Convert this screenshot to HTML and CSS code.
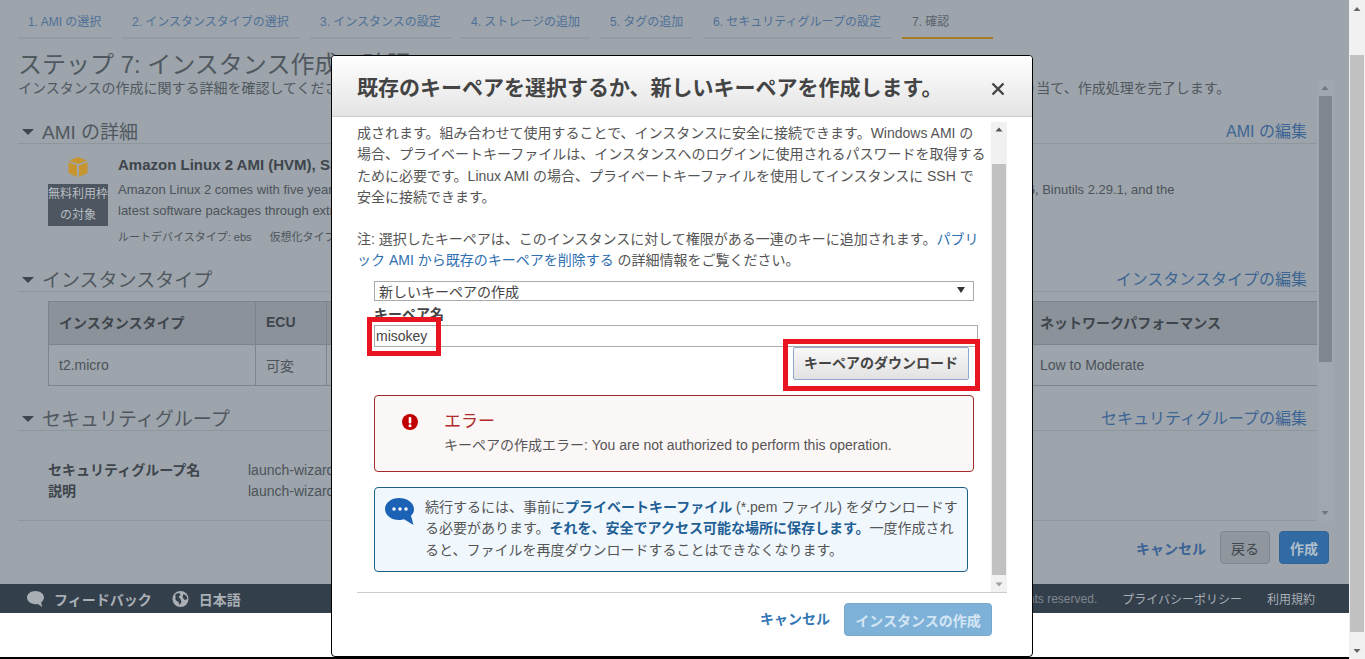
FILE: index.html
```html
<!DOCTYPE html>
<html lang="ja">
<head>
<meta charset="utf-8">
<title>ステップ 7: インスタンス作成の確認</title>
<link rel="stylesheet" href="styles.css">
</head>
<body>
<div class="window">
  <div class="page">
    <nav class="tabs">
      <a class="tab">1. AMI の選択</a>
      <a class="tab">2. インスタンスタイプの選択</a>
      <a class="tab">3. インスタンスの設定</a>
      <a class="tab">4. ストレージの追加</a>
      <a class="tab">5. タグの追加</a>
      <a class="tab">6. セキュリティグループの設定</a>
      <a class="tab tab-active">7. 確認</a>
    </nav>
    <h1 class="page-title">ステップ 7: インスタンス作成の確認</h1>
    <div class="panel">
      <div class="panel-body">
        <p class="page-sub">インスタンスの作成に関する詳細を確認してください。戻って各セクションの設定を編集できます。最後に [作成] をクリックして、インスタンスにキーペアを割り当て、作成処理を完了します。</p>
        <section class="section section-ami">
          <div class="section-head">
            <h2 class="section-title"><svg class="caret" viewBox="0 0 12 6"><polygon points="0,0 12,0 6,6"/></svg>AMI の詳細</h2>
            <a class="section-edit">AMI の編集</a>
          </div>
          <div class="ami">
            <div class="ami-side">
              <svg class="cube" viewBox="0 0 20 20"><polygon points="10,0 19,3.5 10,7 1,3.5" fill="#c6952f"/><polygon points="0.5,5 9,8.4 9,20 0.5,16" fill="#c6952f"/><polygon points="19.5,5 11,8.4 11,20 19.5,16" fill="#c6952f"/></svg>
              <div class="badge">無料利用枠<br>の対象</div>
            </div>
            <div class="ami-info">
              <div class="ami-name">Amazon Linux 2 AMI (HVM), SSD Volume Type - ami-00d101850e971728d</div>
              <div class="ami-desc">Amazon Linux 2 comes with five years support. It provides Linux kernel 4.14 tuned for optimal performance on Amazon EC2, systemd 219, GCC 7.3, Glibc 2.26, Binutils 2.29.1, and the<br>latest software packages through extras.</div>
              <div class="ami-meta"><span>ルートデバイスタイプ: ebs</span><span>仮想化タイプ: hvm</span></div>
            </div>
          </div>
        </section>
        <section class="section section-type">
          <div class="section-head">
            <h2 class="section-title"><svg class="caret" viewBox="0 0 12 6"><polygon points="0,0 12,0 6,6"/></svg>インスタンスタイプ</h2>
            <a class="section-edit">インスタンスタイプの編集</a>
          </div>
          <table class="type-table">
            <colgroup><col class="c1"><col class="c2"><col class="c3"><col class="c3"><col class="c3"><col class="c4"><col class="c5"></colgroup>
            <tr><th>インスタンスタイプ</th><th>ECU</th><th>vCPU</th><th>メモリ (GiB)</th><th>ストレージ</th><th>EBS 最適化</th><th>ネットワークパフォーマンス</th></tr>
            <tr><td>t2.micro</td><td>可変</td><td>1</td><td>1</td><td>EBS のみ</td><td>-</td><td>Low to Moderate</td></tr>
          </table>
        </section>
        <section class="section section-sg">
          <div class="section-head">
            <h2 class="section-title"><svg class="caret" viewBox="0 0 12 6"><polygon points="0,0 12,0 6,6"/></svg>セキュリティグループ</h2>
            <a class="section-edit">セキュリティグループの編集</a>
          </div>
          <dl class="sg">
            <dt>セキュリティグループ名</dt><dd>launch-wizard-1</dd>
            <dt>説明</dt><dd>launch-wizard-1 created</dd>
          </dl>
        </section>
      </div>
      <div class="panel-scroll">
        <svg class="sb-arrow" viewBox="0 0 16 16"><polygon points="4.5,10 11.5,10 8,6"/></svg>
        <div class="panel-thumb"></div>
        <div class="sb-fill"></div>
        <svg class="sb-arrow" viewBox="0 0 16 16"><polygon points="4.5,6 11.5,6 8,10"/></svg>
      </div>
    </div>
    <div class="page-actions">
      <a class="link-bold">キャンセル</a>
      <button class="btn btn-back">戻る</button>
      <button class="btn btn-launch">作成</button>
    </div>
    <footer class="footer">
      <svg class="foot-icon" viewBox="0 0 18 17"><path d="M9 0C4 0 0 3 0 7s4 7 9 7c1 0 1.500 0 2.500-.2L16 17l-1-5c2-1.300 3-3 3-5 0-4-4-7-9-7z"/></svg>
      <span class="foot-strong foot-feedback">フィードバック</span>
      <svg class="foot-icon" viewBox="0 0 16 16"><circle cx="8" cy="8" r="8"/><path d="M3 3l4-1 1 2-2 2 2 2 1 3-2 3-1-3-3-2zM11 3l3 2 1 3-3 1-2-3z" fill="#343f4c"/></svg>
      <span class="foot-strong">日本語</span>
      <span class="foot-copy">© 2008 - 2019, Amazon Web Services, Inc. or its affiliates. All rights reserved.</span>
      <a class="foot-link">プライバシーポリシー</a>
      <a class="foot-link">利用規約</a>
    </footer>
  </div>
  <div class="page-scroll">
    <svg class="sb-arrow" viewBox="0 0 16 16"><polygon points="4.500,11 11.500,11 8,7"/></svg>
    <div class="page-thumb"></div>
    <svg class="sb-arrow" viewBox="0 0 16 16"><polygon points="4.500,6 11.500,6 8,10"/></svg>
  </div>
</div>

<div class="modal">
  <header class="modal-head">
    <h2 class="modal-title">既存のキーペアを選択するか、新しいキーペアを作成します。</h2>
    <svg class="modal-close" viewBox="0 0 14 14"><path d="M1.500 1.500l11 11M12.500 1.500l-11 11"/></svg>
  </header>
  <div class="modal-body">
    <div class="modal-content">
      <p class="modal-text">成されます。組み合わせて使用することで、インスタンスに安全に接続できます。Windows AMI の<br>場合、プライベートキーファイルは、インスタンスへのログインに使用されるパスワードを取得する<br>ために必要です。Linux AMI の場合、プライベートキーファイルを使用してインスタンスに SSH で<br>安全に接続できます。</p>
      <p class="modal-text modal-note">注: 選択したキーペアは、このインスタンスに対して権限がある一連のキーに追加されます。<a class="link">パブリ<br>ック AMI から既存のキーペアを削除する</a> の詳細情報をご覧ください。</p>
      <div class="form">
        <div class="select"><span>新しいキーペアの作成</span><svg class="select-arrow" viewBox="0 0 8 8"><polygon points="0,1 8,1 4,7"/></svg></div>
        <label class="field-label">キーペア名</label>
        <div class="input">misokey</div>
        <div class="download-row"><button class="btn-download">キーペアのダウンロード</button></div>
        <div class="alert alert-error">
          <svg class="alert-icon" viewBox="0 0 16 16"><circle cx="8" cy="8" r="8" fill="#c00000"/><rect x="6.700" y="3" width="2.600" height="6.500" rx="1" fill="#fff"/><circle cx="8" cy="11.800" r="1.500" fill="#fff"/></svg>
          <div>
            <div class="alert-title">エラー</div>
            <div class="alert-msg">キーペアの作成エラー: You are not authorized to perform this operation.</div>
          </div>
        </div>
        <div class="alert alert-info">
          <svg class="info-icon" viewBox="0 0 30 28"><path d="M14 0C6.300 0 0 4.800 0 11s6.300 11 14 11c2 0 3.500-.2 5-.7L28.500 27 26 17.800c2-1.800 3-4.200 3-6.800C29 4.800 22 0 14 0z" fill="#1c62b4"/><circle cx="9" cy="11" r="1.700" fill="#fff"/><circle cx="15" cy="11" r="1.700" fill="#fff"/><circle cx="21" cy="11" r="1.700" fill="#fff"/></svg>
          <p class="info-text">続行するには、事前に<b>プライベートキーファイル</b> (*.pem ファイル) をダウンロードす<br>る必要があります。<b>それを、安全でアクセス可能な場所に保存します。</b>一度作成され<br>ると、ファイルを再度ダウンロードすることはできなくなります。</p>
        </div>
      </div>
    </div>
    <div class="modal-scroll">
      <svg class="sb-arrow" viewBox="0 0 16 16"><polygon points="4.500,9.500 11.500,9.500 8,5.500"/></svg>
      <div class="modal-gap"></div>
      <div class="modal-thumb"></div>
      <svg class="sb-arrow" viewBox="0 0 16 16"><polygon points="4.500,6.500 11.500,6.500 8,10.500"/></svg>
    </div>
  </div>
  <div class="modal-foot">
    <a class="link-bold">キャンセル</a>
    <button class="btn btn-create">インスタンスの作成</button>
  </div>
  <span class="mark mark-input"></span>
  <span class="mark mark-button"></span>
</div>
</body>
</html>
```
FILE: styles.css
```css
* { box-sizing: border-box; }
html, body { margin: 0; padding: 0; height: 659px; overflow: hidden; }
body {
  font-family: "Liberation Sans", "Noto Sans CJK JP", sans-serif;
  font-size: 14px;
  color: #444;
  background: #fff;
  position: relative;
}
.window { display: flex; height: 659px; }
.page { width: 1349px; height: 659px; display: flex; flex-direction: column; position: relative; border-bottom: 2px solid #000; background: linear-gradient(#9da4ab, #9da4ab) top / 100% 613px no-repeat #fff; }

/* tabs */
.tabs { display: grid; grid-template-columns: 94px 178px 141px 129px 93px 189px 91px; gap: 10px; padding-left: 18px; height: 39px; flex: none; }
.tab { display: block; padding: 14px 0 0 10px; font-size: 12px; line-height: 16px; color: #4f7096; border-bottom: 2px solid #949ba2; white-space: nowrap; }
.tab-active { color: #5a636c; border-bottom-color: #a57a2a; }

.page-title { margin: 11px 0 0 18px; font-size: 24px; line-height: 30px; font-weight: 400; color: #50585f; white-space: nowrap; flex: none; }

/* panel */
.panel { display: flex; height: 441px; margin-left: 18px; width: 1315px; flex: none; }
.panel-body { width: 1299px; border-bottom: 1px solid #8f979e; }
.page-sub { margin: 0; font-size: 14px; line-height: 17px; color: #50585f; white-space: nowrap; }
.panel-scroll { width: 16px; background: #a0a7ae; display: flex; flex-direction: column; align-items: center; }
.panel-scroll .sb-arrow polygon { fill: #6f767d; }
.panel-thumb { width: 13px; height: 266px; background: #7f868d; }
.sb-fill { flex: 1; }
.sb-arrow { width: 16px; height: 16px; display: block; flex: none; }
.sb-arrow polygon { fill: #666; }

.section-head { display: flex; justify-content: space-between; align-items: center; height: 24px; border-bottom: 1px solid #8f979e; padding-right: 10px; }
.section-title { margin: 0; padding-top: 1px; display: flex; align-items: center; font-size: 19px; font-weight: 400; line-height: 23px; color: #50585f; white-space: nowrap; }
.caret { width: 12px; height: 6px; margin: 0 8px 0 4px; fill: #3e454c; }
.section-edit { font-size: 16px; line-height: 23px; color: #3d6594; }

.section-ami { margin-top: 23px; height: 148px; }
.ami { display: flex; gap: 10px; padding: 11px 0 0 30px; }
.ami-side { width: 60px; display: flex; flex-direction: column; align-items: center; flex: none; }
.cube { width: 20px; height: 20px; margin-top: 2px; }
.badge { width: 60px; height: 42px; margin-top: 7px; background: #4d5661; color: #b9bec3; font-size: 12px; line-height: 21px; text-align: center; white-space: nowrap; }
.ami-name { font-size: 15px; font-weight: 700; line-height: 20px; color: #3e454c; white-space: nowrap; }
.ami-desc { margin-top: 4px; font-size: 13px; line-height: 21px; color: #4c535a; white-space: nowrap; }
.ami-meta { margin-top: 8px; display: flex; gap: 18px; font-size: 11px; line-height: 16px; color: #4c535a; white-space: nowrap; }

.type-table { margin: 9px 0 0 30px; width: 1269px; border-collapse: collapse; table-layout: fixed; color: #4c535a; border: 1px solid #7d858c; }
.c1 { width: 207px; } .c2 { width: 71px; } .c3 { width: 140px; } .c4 { width: 283px; } .c5 { width: 288px; }
.type-table th { height: 43px; padding: 0 10px 2px; background: #8b9299; text-align: left; font-weight: 700; color: #3e454c; border: 1px solid #7d858c; white-space: nowrap; }
.type-table td { height: 41px; padding: 0 10px; border: 1px solid #7d858c; white-space: nowrap; }

.section-type { height: 139px; }
.sg { margin: 29px 0 0 30px; display: grid; grid-template-columns: 200px 1fr; line-height: 21px; }
.sg dt { font-weight: 700; color: #3e454c; }
.sg dd { margin: 0; color: #4c535a; }

.page-actions { display: flex; justify-content: flex-end; align-items: center; gap: 9px; height: 33px; margin-top: 10px; padding-right: 20px; flex: none; }
.page-actions .link-bold { color: #3a6396; margin-right: 5px; }
.link-bold { font-weight: 700; color: #3477b5; font-size: 14px; white-space: nowrap; }
.btn { height: 33px; border-radius: 4px; font: 700 14px "Liberation Sans", "Noto Sans CJK JP", sans-serif; padding: 0; white-space: nowrap; }
.btn-back { width: 50px; background: #8f969d; border: 1px solid #7f868d; color: #3e454c; font-weight: 400; }
.btn-launch { width: 50px; background: #326ba3; border: 1px solid #2f6497; color: #aebdcb; }

.footer { display: flex; align-items: center; height: 29px; margin-top: 20px; background: #343f4c; color: #a9afb5; padding: 0 34px 0 27px; flex: none; white-space: nowrap; }
.foot-icon { fill: #a9afb5; height: 16px; width: 17px; flex: none; }
.foot-strong { font-weight: 700; margin-left: 10px; }
.foot-feedback { margin-right: 20px; }
.foot-copy { margin-left: auto; font-size: 12px; color: #7f878f; }
.foot-link { font-size: 12px; margin-left: 25px; }

/* page scrollbar */
.page-scroll { width: 16px; height: 659px; background: #f1f1f1; display: flex; flex-direction: column; align-items: center; }
.page-thumb { width: 14px; flex: 1; margin: 39px 0 11px; background: #c1c1c1; }

/* modal */
.modal { position: absolute; left: 331px; top: 55px; width: 702px; height: 602px; background: #fff; border: 1px solid #000; border-radius: 4px; }
.modal-head { display: flex; justify-content: space-between; align-items: center; height: 61px; padding: 3px 27px 0 25px; background: linear-gradient(#fff, #e4e4e4); border-bottom: 1px solid #ccc; border-radius: 3px 3px 0 0; }
.modal-title { margin: 0; font-size: 21px; line-height: 28px; font-weight: 700; color: #444; white-space: nowrap; }
.modal-close { width: 14px; height: 14px; fill: none; stroke: #444; stroke-width: 2.400; margin-top: 2px; }
.modal-body { display: flex; width: 650px; height: 471px; margin: 5px 0 0 25px; border-bottom: 1px solid #ccc; }
.modal-content { width: 634px; padding-top: 1px; }
.modal-text { margin: 0; line-height: 21.33px; color: #555; white-space: nowrap; }
.modal-note { margin-top: 20.500px; }
.link { color: #2f70b0; }
.form { margin: 9.500px 0 0 17px; width: 604px; }
.select { width: 600px; height: 20px; border: 1px solid #aaa; display: flex; justify-content: space-between; align-items: flex-start; padding: 0 8px 0 4px; line-height: 20px; color: #444; overflow: hidden; }
.select-arrow { width: 8px; height: 8px; margin-top: 4px; fill: #333; }
.field-label { display: block; font-weight: 700; line-height: 22px; margin-top: 2px; color: #444; }
.input { height: 22px; width: 604px; border: 1px solid #aaa; line-height: 20px; padding-left: 1px; color: #444; }
.download-row { display: flex; justify-content: flex-end; padding-right: 9px; }
.btn-download { width: 176px; height: 33px; padding: 0 0 2px; background: linear-gradient(#f8f8f8, #e2e2e2); border: 1px solid #8fa8d0; border-radius: 2px; font: 700 14px "Liberation Sans", "Noto Sans CJK JP", sans-serif; color: #444; }
.alert { width: 600px; border-radius: 4px; display: flex; }
.alert-error { height: 77px; margin-top: 15px; border: 1px solid #a32a2a; background: #fcf7f7; padding: 16px 0 0 27px; gap: 26px; }
.alert-icon { width: 16px; height: 16px; margin-top: 2px; flex: none; }
.alert-title { font-size: 17px; line-height: 20px; color: #b02a2a; }
.alert-msg { margin-top: 3px; line-height: 20px; color: #555; white-space: nowrap; }
.alert-info { width: 594px; height: 85px; margin-top: 15px; border: 1px solid #1c6088; background: #f0f8fe; padding: 9px 0 0 10px; gap: 10px; }
.info-icon { width: 30px; height: 28px; margin-top: 1px; flex: none; }
.info-text { margin: 0; line-height: 21.33px; color: #555; white-space: nowrap; }
.info-text b { color: #1f5f95; }
.modal-scroll { width: 16px; margin-left: 0; background: #f1f1f1; display: flex; flex-direction: column; align-items: center; }
.modal-gap { height: 26px; flex: none; }
.modal-thumb { width: 14px; height: 411px; background: #c1c1c1; flex: none; }
.modal-scroll .sb-arrow polygon { fill: #555; }
.modal-scroll .sb-arrow:last-child { margin-top: auto; }
.modal-scroll .sb-arrow:last-child polygon { fill: #a0a0a0; }
.modal-foot { display: flex; justify-content: flex-end; align-items: flex-start; gap: 14px; height: 62px; padding: 10px 40px 0 0; }
.modal-foot .link-bold { line-height: 33px; }
.btn-create { width: 148px; background: #7eb1d8; border: 1px solid #77a9cf; color: #d4e6f3; }
.mark { position: absolute; border: 5.500px solid #e8141f; }
.mark-input { left: 35px; top: 261px; width: 74px; height: 39px; }
.mark-button { left: 451px; top: 283px; width: 197px; height: 52px; }
```
